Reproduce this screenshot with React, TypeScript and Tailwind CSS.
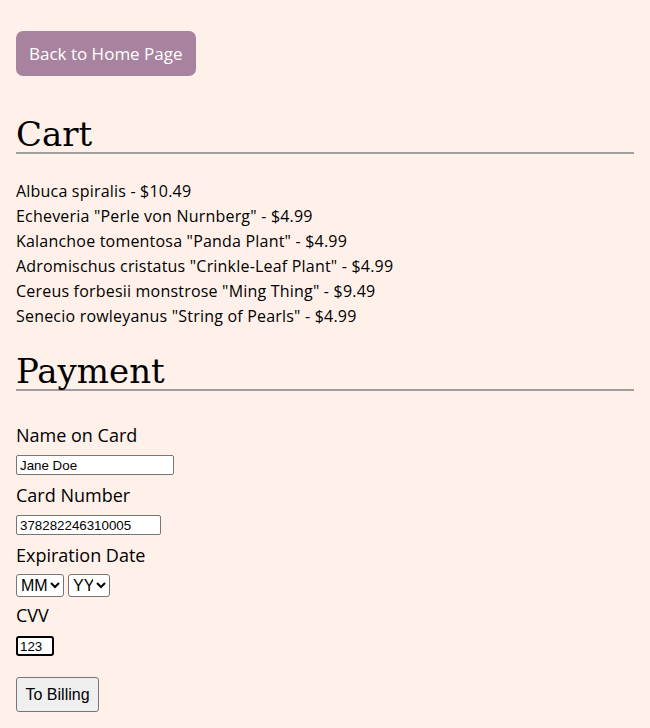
export default function App() {
  const items = [
    'Albuca spiralis - $10.49',
    'Echeveria "Perle von Nurnberg" - $4.99',
    'Kalanchoe tomentosa "Panda Plant" - $4.99',
    'Adromischus cristatus "Crinkle-Leaf Plant" - $4.99',
    'Cereus forbesii monstrose "Ming Thing" - $9.49',
    'Senecio rowleyanus "String of Pearls" - $4.99',
  ];

  const inputCls =
    "block h-[20px] bg-white border border-[#767676] rounded-[2px] px-[3px] text-[13.33px] text-black font-['Liberation_Sans',Arial,sans-serif] outline-none";

  return (
    <div className="min-h-[728px] bg-[#fff1ea] px-4 pt-[31px] pb-4 text-black font-['Open_Sans','Noto_Sans',sans-serif]">
      <button className="h-[45px] px-[13px] rounded-[7px] bg-[#a8839f] text-white text-[17px]">
        Back to Home Page
      </button>

      {/* Cart */}
      <h2 className="mt-[41px] text-[34px] leading-none pb-[1px] border-b-2 border-[#9e9e9e] font-['DejaVu_Serif',serif]">
        Cart
      </h2>
      <ul className="mt-[25px] text-[16px] leading-[25px] tracking-[0.2px]">
        {items.map((it) => (
          <li key={it}>{it}</li>
        ))}
      </ul>

      {/* Payment */}
      <h2 className="mt-[25px] text-[34px] leading-none pb-[1px] border-b-2 border-[#9e9e9e] font-['DejaVu_Serif',serif]">
        Payment
      </h2>

      <form className="text-[18px]" onSubmit={(e) => e.preventDefault()}>
        <label className="block mt-[31px] leading-[27px]">Name on Card</label>
        <input className={`${inputCls} mt-[6px] w-[158px]`} defaultValue="Jane Doe" />

        <label className="block mt-[7px] leading-[27px]">Card Number</label>
        <input className={`${inputCls} mt-[6px] w-[145px]`} defaultValue="378282246310005" />

        <label className="block mt-[7px] leading-[27px]">Expiration Date</label>
        <div className="mt-[5px] flex gap-[4px]">
          <select className="h-[23px] w-[48px] bg-white border border-[#767676] rounded-[3px] text-[16px] font-['Liberation_Sans',Arial,sans-serif]">
            <option>MM</option>
          </select>
          <select className="h-[23px] w-[42px] bg-white border border-[#767676] rounded-[3px] text-[16px] font-['Liberation_Sans',Arial,sans-serif]">
            <option>YY</option>
          </select>
        </div>

        <label className="block mt-[5px] leading-[27px]">CVV</label>
        <input
          className="block mt-[7px] h-[20px] w-[38px] bg-white border-2 border-black rounded-[3px] px-[2px] text-[13.33px] text-black font-['Liberation_Sans',Arial,sans-serif] outline-none"
          defaultValue="123"
        />

        <button className="block mt-[21px] h-[35px] px-[8.5px] bg-[#efefef] border border-[#767676] rounded-[3px] text-[16px] font-['Liberation_Sans',Arial,sans-serif]">
          To Billing
        </button>
      </form>
    </div>
  );
}
